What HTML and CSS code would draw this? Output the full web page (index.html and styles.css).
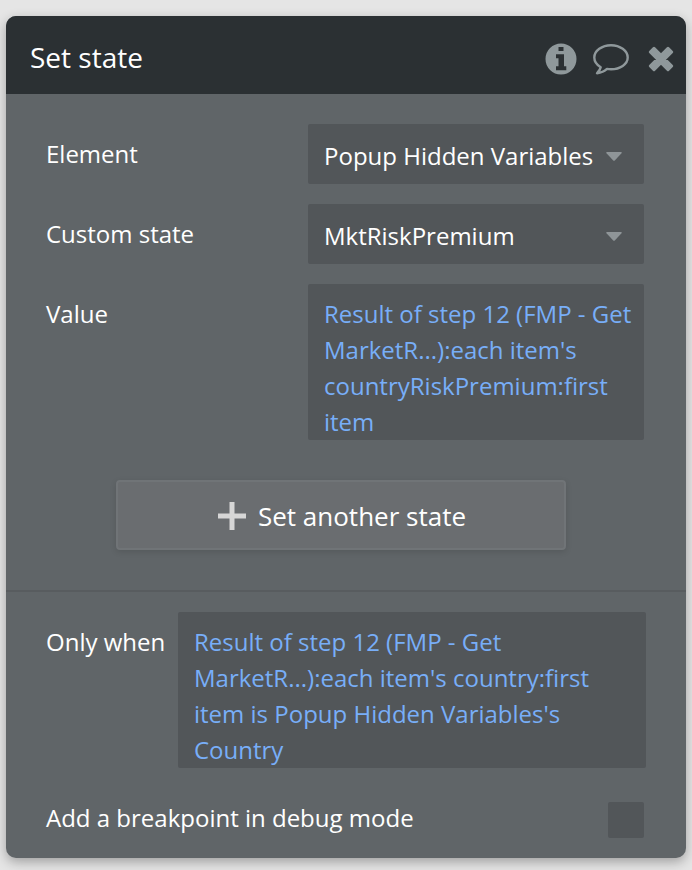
FILE: index.html
```html
<!DOCTYPE html>
<html lang="en">
<head>
    <meta charset="UTF-8">
    <title>Set state</title>
    <link rel="stylesheet" href="styles.css">
</head>
<body>
    <form class="panel">
        <header class="panel-header">
            <h1>Set state</h1>
            <button type="button" class="icon-button" aria-label="Info">
                <svg width="32" height="32" viewBox="0 0 32 32">
                    <path fill="currentColor" fill-rule="evenodd" d="M16 .5a15.500 15.500 0 1 0 0 31a15.500 15.500 0 1 0 0-31zM13.500 4h5v4h-5zM11 11.300h8v12h2.300v4H11v-4h2.500v-8H11z"/>
                </svg>
            </button>
            <button type="button" class="icon-button" aria-label="Comment">
                <svg width="36" height="32" viewBox="0 0 36 32">
                    <path fill="none" stroke="currentColor" stroke-width="2.400" stroke-linejoin="round" d="M18 2.200C9 2.200 1.300 7.700 1.300 14.500c0 3.900 2.500 7.400 6.400 9.700c-.4 2.300-1.600 3.700-3.700 6c4.500-.5 7.600-2 10-4.300c1.300.2 2.600.3 4 .3c9 0 16.700-4.900 16.700-11.700S27 2.200 18 2.200z"/>
                </svg>
            </button>
            <button type="button" class="icon-button" aria-label="Close">
                <svg width="26" height="26" viewBox="0 0 26 26">
                    <path fill="currentColor" stroke="currentColor" stroke-width="3" stroke-linejoin="round" d="M6 2.300L13 9.300L20 2.300L23.700 6L16.700 13L23.700 20L20 23.700L13 16.700L6 23.700L2.300 20L9.300 13L2.300 6z"/>
                </svg>
            </button>
        </header>

        <section class="fields">
            <div class="row">
                <label for="element">Element</label>
                <div class="dropdown">
                    <select id="element">
                        <option>Popup Hidden Variables</option>
                    </select>
                    <svg class="arrow" width="16" height="9" viewBox="0 0 16 9"><path fill="currentColor" d="M1 0h14q1.500 0 .5 1.200L9 8.300q-1 1-2 0L.5 1.200Q-.5 0 1 0z"/></svg>
                </div>
            </div>
            <div class="row">
                <label for="state">Custom state</label>
                <div class="dropdown">
                    <select id="state">
                        <option>MktRiskPremium</option>
                    </select>
                    <svg class="arrow" width="16" height="9" viewBox="0 0 16 9"><path fill="currentColor" d="M1 0h14q1.500 0 .5 1.200L9 8.300q-1 1-2 0L.5 1.200Q-.5 0 1 0z"/></svg>
                </div>
            </div>
            <div class="row">
                <label for="value">Value</label>
                <textarea id="value" class="expression" rows="4" spellcheck="false">Result of step 12 (FMP - Get MarketR...):each item's countryRiskPremium:first item</textarea>
            </div>
            <button type="button" class="add-button">
                <svg width="28" height="28" viewBox="0 0 28 28"><path stroke="currentColor" stroke-width="5" d="M14 0v28M0 14h28"/></svg>
                Set another state
            </button>
        </section>

        <section class="conditions">
            <div class="condition-row">
                <label for="condition">Only when</label>
                <textarea id="condition" class="expression" rows="4" spellcheck="false">Result of step 12 (FMP - Get MarketR...):each item's country:first item is Popup Hidden Variables's Country</textarea>
            </div>
            <div class="breakpoint-row">
                <label for="breakpoint">Add a breakpoint in debug mode</label>
                <input type="checkbox" id="breakpoint">
            </div>
        </section>
    </form>
</body>
</html>
```
FILE: styles.css
```css
* {
    box-sizing: border-box;
}
body {
    margin: 0;
    padding: 16px 6px 12px;
    background: #e5e5e5;
    color: #fff;
    font-family: "Open Sans", sans-serif;
    font-size: 24px;
    line-height: 36px;
}
button, select, textarea {
    font: inherit;
    color: inherit;
}
.panel {
    background: #606568;
    border-radius: 10px;
    box-shadow: 0 4px 12px rgba(0, 0, 0, 0.3);
}
.panel-header {
    display: flex;
    align-items: center;
    height: 78px;
    padding: 8px 12px 0 24px;
    background: #2b3033;
    border-radius: 10px 10px 0 0;
}
h1 {
    flex: 1;
    margin: 0;
    padding-bottom: 4px;
    font-size: 28px;
    font-weight: 400;
}
.icon-button {
    display: flex;
    margin-left: 16px;
    padding: 0;
    border: none;
    background: none;
    color: #8f989b;
    cursor: pointer;
}
.icon-button:last-child {
    margin-left: 19px;
}
.fields {
    display: flex;
    flex-direction: column;
    gap: 20px;
    padding: 30px 42px 40px 40px;
}
.row {
    display: grid;
    grid-template-columns: 262px 1fr;
}
.row label, .condition-row label {
    padding-top: 12px;
}
.dropdown {
    position: relative;
}
select {
    display: block;
    width: 100%;
    height: 60px;
    padding: 4px 48px 0 16px;
    border: none;
    border-radius: 2px;
    background: #525659;
    appearance: none;
}
.arrow {
    position: absolute;
    top: 28px;
    right: 22px;
    color: #8f9598;
    pointer-events: none;
}
.expression {
    display: block;
    width: 100%;
    height: 156px;
    padding: 12px 8px 0 16px;
    border: none;
    border-radius: 2px;
    background: #525659;
    color: #78aef8;
    resize: none;
    overflow: hidden;
}
.add-button {
    display: flex;
    align-items: center;
    justify-content: center;
    gap: 12px;
    height: 70px;
    margin: 20px 78px 0 70px;
    padding: 2px 0 0 2px;
    border: 2px solid #707477;
    border-radius: 4px;
    background: #6a6d70;
    box-shadow: 0 2px 6px rgba(0, 0, 0, 0.12);
    font-size: 26px;
    cursor: pointer;
}
.add-button svg {
    color: #d6d6d6;
}
.conditions {
    padding: 20px 40px;
    border-top: 2px solid #585c5f;
}
.condition-row {
    display: grid;
    grid-template-columns: 132px 1fr;
}
.breakpoint-row {
    display: flex;
    align-items: center;
    justify-content: space-between;
    margin-top: 34px;
    padding-right: 2px;
}
.breakpoint-row label {
    padding-bottom: 4px;
    line-height: 32px;
}
input[type="checkbox"] {
    width: 36px;
    height: 36px;
    margin: 0;
    border-radius: 2px;
    background: #525659;
    appearance: none;
}
input[type="checkbox"]:checked {
    background: #77aaf2;
}
```
